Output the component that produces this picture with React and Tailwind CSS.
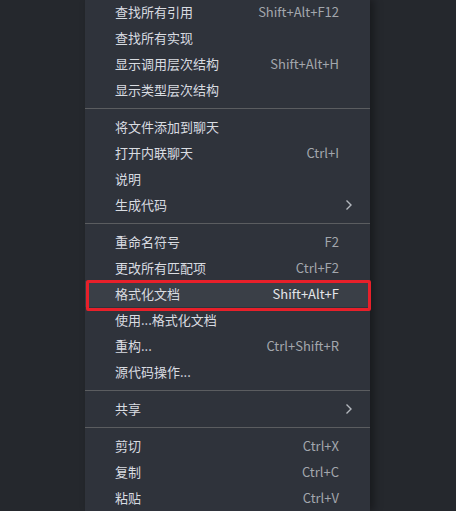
import React from "react";

const groups = [
  [
    { label: "查找所有引用", keys: "Shift+Alt+F12" },
    { label: "查找所有实现" },
    { label: "显示调用层次结构", keys: "Shift+Alt+H" },
    { label: "显示类型层次结构" },
  ],
  [
    { label: "将文件添加到聊天" },
    { label: "打开内联聊天", keys: "Ctrl+I" },
    { label: "说明" },
    { label: "生成代码", sub: true },
  ],
  [
    { label: "重命名符号", keys: "F2" },
    { label: "更改所有匹配项", keys: "Ctrl+F2" },
    { label: "格式化文档", keys: "Shift+Alt+F", active: true },
    { label: "使用...格式化文档" },
    { label: "重构...", keys: "Ctrl+Shift+R" },
    { label: "源代码操作..." },
  ],
  [{ label: "共享", sub: true }],
  [
    { label: "剪切", keys: "Ctrl+X" },
    { label: "复制", keys: "Ctrl+C" },
    { label: "粘贴", keys: "Ctrl+V" },
  ],
];

function Chevron() {
  return (
    <svg width="8" height="12" viewBox="0 0 8 12" className="text-[#b4b8be]">
      <path d="M1.5 1.5 L6 6 L1.5 10.5" fill="none" stroke="currentColor" strokeWidth="1.4" />
    </svg>
  );
}

function Item({ item }) {
  return (
    <div
      className={
        "relative flex items-center h-[26px] pl-[30px] pr-[31px] " +
        (item.active ? "bg-[#3a3f47]" : "")
      }
    >
      <span className="flex-1 text-[13px] leading-[26px] text-[#d9dce1]">{item.label}</span>
      {item.keys && (
        <span
          className={
            "text-[13px] leading-[26px] " + (item.active ? "text-[#e4e6ea]" : "text-[#a3a7ad]")
          }
        >
          {item.keys}
        </span>
      )}
      {item.sub && (
        <span className="absolute right-[17px] top-[7px]">
          <Chevron />
        </span>
      )}
      {item.active && (
        <div className="absolute left-[1px] right-[-1px] top-[-1px] bottom-[-4px] border-[3.5px] border-[#e8202a] rounded-[2px]" />
      )}
    </div>
  );
}

export default function App() {
  return (
    <div
      className="w-[456px] h-[511px] overflow-hidden bg-[#25282d] flex"
      style={{ fontFamily: '"Segoe UI", "Noto Sans CJK SC", "Noto Sans", sans-serif' }}
    >
      <div className="ml-[85px] w-[285px] -mt-[1px] bg-[#2f333b] shadow-[4px_0_8px_rgba(0,0,0,0.35)]">
        {groups.map((g, i) => (
          <div key={i}>
            {i > 0 && <div className="my-[5px] h-px bg-[#5b5d60]" />}
            {g.map((item) => (
              <Item key={item.label} item={item} />
            ))}
          </div>
        ))}
      </div>
    </div>
  );
}
